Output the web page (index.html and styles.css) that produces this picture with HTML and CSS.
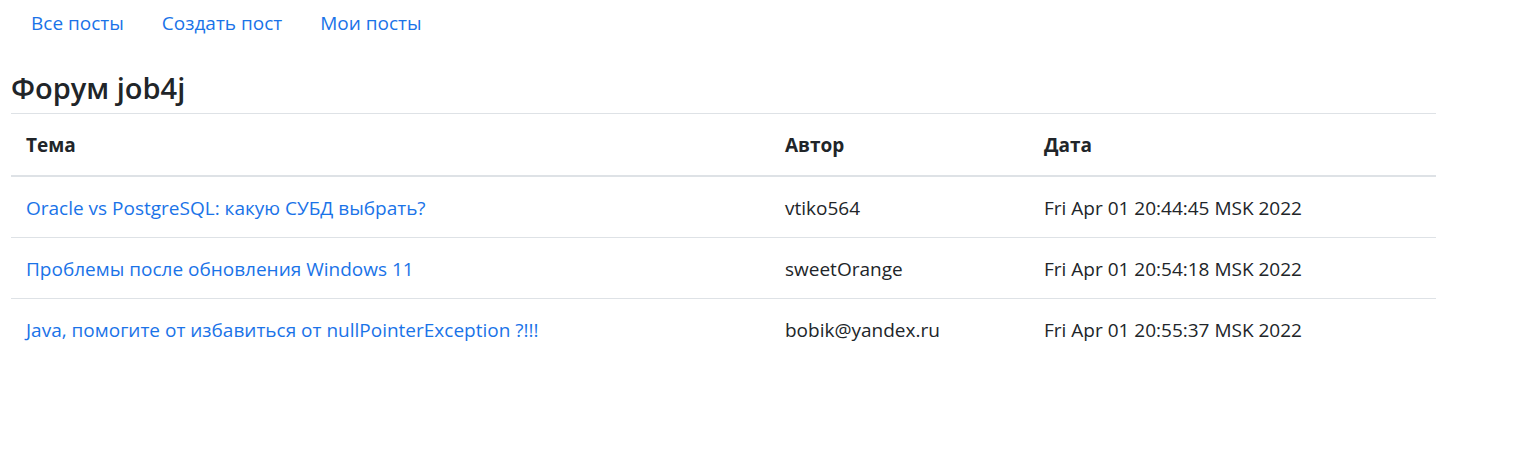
FILE: index.html
```html
<!DOCTYPE html>
<html lang="ru">
<head>
<meta charset="utf-8">
<title>Форум job4j</title>
<link rel="stylesheet" href="styles.css">
</head>
<body>
<div class="page">
  <ul class="nav">
    <li><a class="nav-link" href="#">Все посты</a></li>
    <li><a class="nav-link" href="#">Создать пост</a></li>
    <li><a class="nav-link" href="#">Мои посты</a></li>
  </ul>
  <h3 class="title">Форум job4j</h3>
  <table class="table">
    <thead>
      <tr><th class="c-topic">Тема</th><th class="c-author">Автор</th><th class="c-date">Дата</th></tr>
    </thead>
    <tbody>
      <tr><td><a href="#">Oracle vs PostgreSQL: какую СУБД выбрать?</a></td><td>vtiko564</td><td>Fri Apr 01 20:44:45 MSK 2022</td></tr>
      <tr><td><a href="#">Проблемы после обновления Windows 11</a></td><td>sweetOrange</td><td>Fri Apr 01 20:54:18 MSK 2022</td></tr>
      <tr><td><a href="#">Java, помогите от избавиться от nullPointerException ?!!!</a></td><td>bobik@yandex.ru</td><td>Fri Apr 01 20:55:37 MSK 2022</td></tr>
    </tbody>
  </table>
</div>
</body>
</html>
```
FILE: styles.css
```css
* { box-sizing: border-box; }
body {
  margin: 0;
  font-family: "Open Sans", "Noto Sans", sans-serif;
  font-size: 19px;
  color: #212529;
  background: #fff;
}
a { color: #1a73e8; text-decoration: none; }
.page { padding: 0 0 0 11px; width: 1436px; }
.nav {
  list-style: none;
  margin: 0;
  padding: 0;
  display: flex;
}
.nav-link {
  display: block;
  padding: 9px 18px 9px 20px;
  line-height: 28px;
}
.title {
  margin: 24px 0 0;
  font-size: 29px;
  font-weight: 600;
  line-height: 36px;
  padding-bottom: 7px;
}
.table {
  width: 100%;
  border-collapse: collapse;
}
.table th, .table td {
  text-align: left;
  padding: 18px 15px 16px;
  line-height: 26px;
  border-top: 1px solid #dee2e6;
  vertical-align: middle;
}
.table th { font-weight: 700; }
.table thead th { border-bottom: 2px solid #dee2e6; padding-top: 18px; padding-bottom: 17px; }
.c-topic { width: 759px; }
.c-author { width: 259px; }
```
